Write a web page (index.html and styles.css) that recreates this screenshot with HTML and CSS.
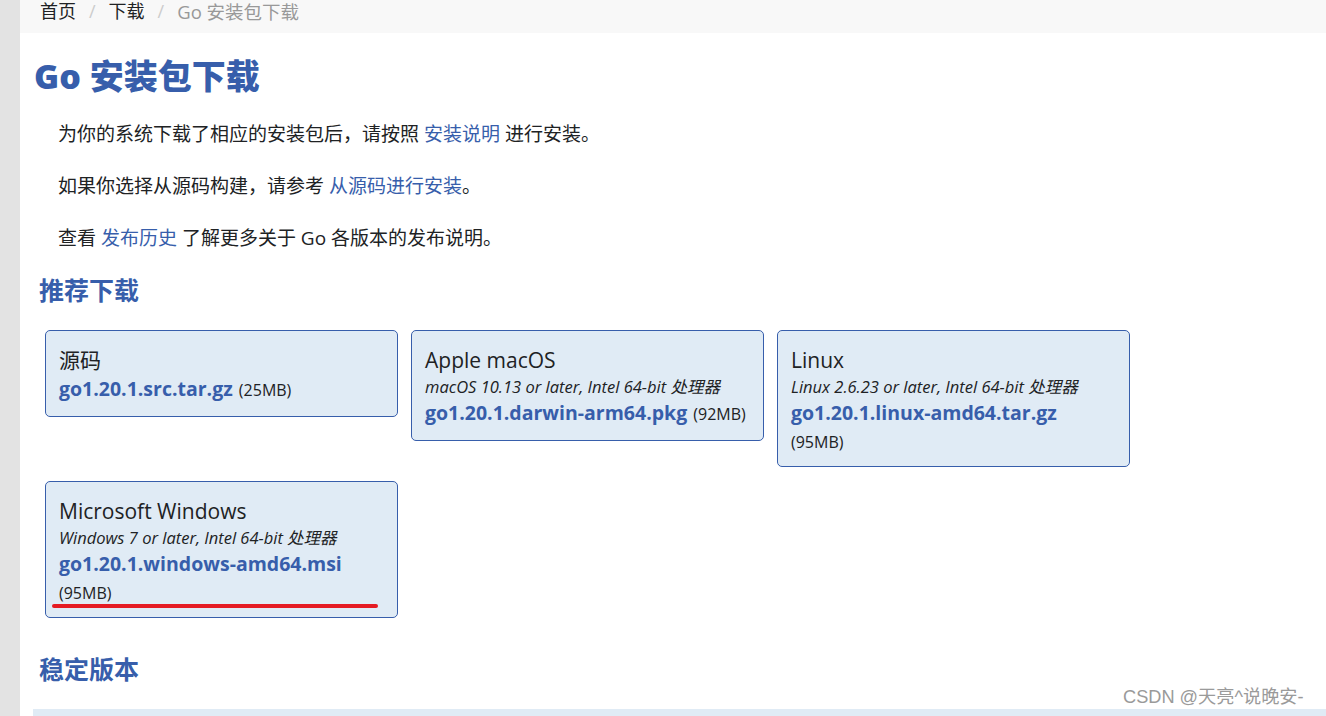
FILE: index.html
```html
<!DOCTYPE html>
<html lang="zh-CN">
<head>
<meta charset="utf-8">
<title>Go 安装包下载</title>
<link rel="stylesheet" href="styles.css">
</head>
<body>
<div class="page">
  <aside class="strip"></aside>
  <div class="main">
    <nav class="crumbs">
      <a class="crumb" href="#">首页</a><span class="sep">/</span><a class="crumb" href="#">下载</a><span class="sep">/</span><span class="crumb current">Go 安装包下载</span>
    </nav>
    <div class="content">
      <h1 class="title">Go 安装包下载</h1>
      <p class="para">为你的系统下载了相应的安装包后，请按照 <a class="link" href="#">安装说明</a> 进行安装。</p>
      <p class="para">如果你选择从源码构建，请参考 <a class="link" href="#">从源码进行安装</a>。</p>
      <p class="para">查看 <a class="link" href="#">发布历史</a> 了解更多关于 Go 各版本的发布说明。</p>

      <h2 class="section">推荐下载</h2>
      <div class="grid">
        <div class="card">
          <div class="card-title">源码</div>
          <div class="card-line"><a class="file" href="#">go1.20.1.src.tar.gz</a> <span class="size">(25MB)</span></div>
        </div>
        <div class="card">
          <div class="card-title">Apple macOS</div>
          <div class="card-desc">macOS 10.13 or later, Intel 64-bit 处理器</div>
          <div class="card-line"><a class="file" href="#">go1.20.1.darwin-arm64.pkg</a> <span class="size">(92MB)</span></div>
        </div>
        <div class="card">
          <div class="card-title">Linux</div>
          <div class="card-desc">Linux 2.6.23 or later, Intel 64-bit 处理器</div>
          <div class="card-line"><a class="file" href="#">go1.20.1.linux-amd64.tar.gz</a></div>
          <div class="card-size">(95MB)</div>
        </div>
        <div class="card card-marked">
          <div class="card-title">Microsoft Windows</div>
          <div class="card-desc">Windows 7 or later, Intel 64-bit 处理器</div>
          <div class="card-line"><a class="file" href="#">go1.20.1.windows-amd64.msi</a></div>
          <div class="card-size">(95MB)</div>
          <span class="red-mark"></span>
        </div>
      </div>

      <h2 class="section section-stable">稳定版本</h2>
      <div class="table-head"></div>
    </div>
  </div>
</div>
<div class="watermark">CSDN @天亮^说晚安-</div>
</body>
</html>
```

FILE: styles.css
```css
html, body {
  margin: 0;
  padding: 0;
  background: #ffffff;
  height: 100%;
  overflow: hidden;
}

body {
  font-family: "Open Sans", "Noto Sans CJK SC", sans-serif;
  color: #202224;
}

.page {
  display: flex;
  min-height: 716px;
}

.strip {
  width: 20px;
  flex: none;
  background: #e3e3e3;
}

.main {
  flex: 1;
  display: flex;
  flex-direction: column;
}

.crumbs {
  height: 33px;
  background: #f8f8f8;
  padding-left: 20px;
  font-size: 18px;
  line-height: 23px;
  display: flex;
  align-items: flex-start;
}

.crumb {
  color: #202224;
  text-decoration: none;
}

.crumb.current {
  color: #999999;
  font-size: 18.5px;
}

.sep {
  color: #cccccc;
  margin: 0 13px;
}

.content {
  padding-left: 14px;
  flex: 1;
  display: flex;
  flex-direction: column;
}

.title {
  margin: 23px 0 0 0;
  font-size: 34px;
  line-height: 40px;
  font-weight: 800;
  color: #375eab;
}

.para {
  margin: 24px 0 0 24px;
  font-size: 19px;
  line-height: 28px;
}

.link {
  color: #375eab;
  text-decoration: none;
}

.section {
  margin: 22px 0 0 5px;
  font-size: 25px;
  line-height: 32px;
  font-weight: 700;
  color: #375eab;
}

.section-stable {
  margin-top: 35px;
}

.grid {
  margin: 24px 0 0 11px;
  display: grid;
  grid-template-columns: repeat(3, 353px);
  column-gap: 13px;
  row-gap: 14px;
  align-items: start;
}

.card {
  position: relative;
  background: #e0ebf5;
  border: 1px solid #375eab;
  border-radius: 5px;
  padding: 14px 13px 11px 13px;
}

.card-title {
  font-size: 21px;
  line-height: 30px;
}

.card-desc {
  font-size: 16.5px;
  line-height: 24px;
  font-style: italic;
}

.card-line {
  font-size: 16px;
  line-height: 30px;
  height: 30px;
  white-space: nowrap;
}

.card-size {
  font-size: 16px;
  line-height: 26px;
  height: 26px;
}

.file {
  color: #375eab;
  font-weight: 700;
  font-size: 19.5px;
  line-height: 20px;
  text-decoration: none;
}

.size {
  font-size: 16px;
  margin-left: 2px;
}

.red-mark {
  position: absolute;
  left: 6px;
  top: 122px;
  width: 326px;
  height: 4px;
  border-radius: 2px;
  background: #e51b23;
}

.table-head {
  margin: 24px 0 0 -1px;
  height: 20px;
  background: #e0ebf5;
}

.watermark {
  position: absolute;
  left: 1123px;
  top: 685px;
  font-family: "Liberation Sans", "Noto Sans CJK SC", sans-serif;
  font-size: 18.2px;
  line-height: 24px;
  color: #9a9a9a;
}
```
